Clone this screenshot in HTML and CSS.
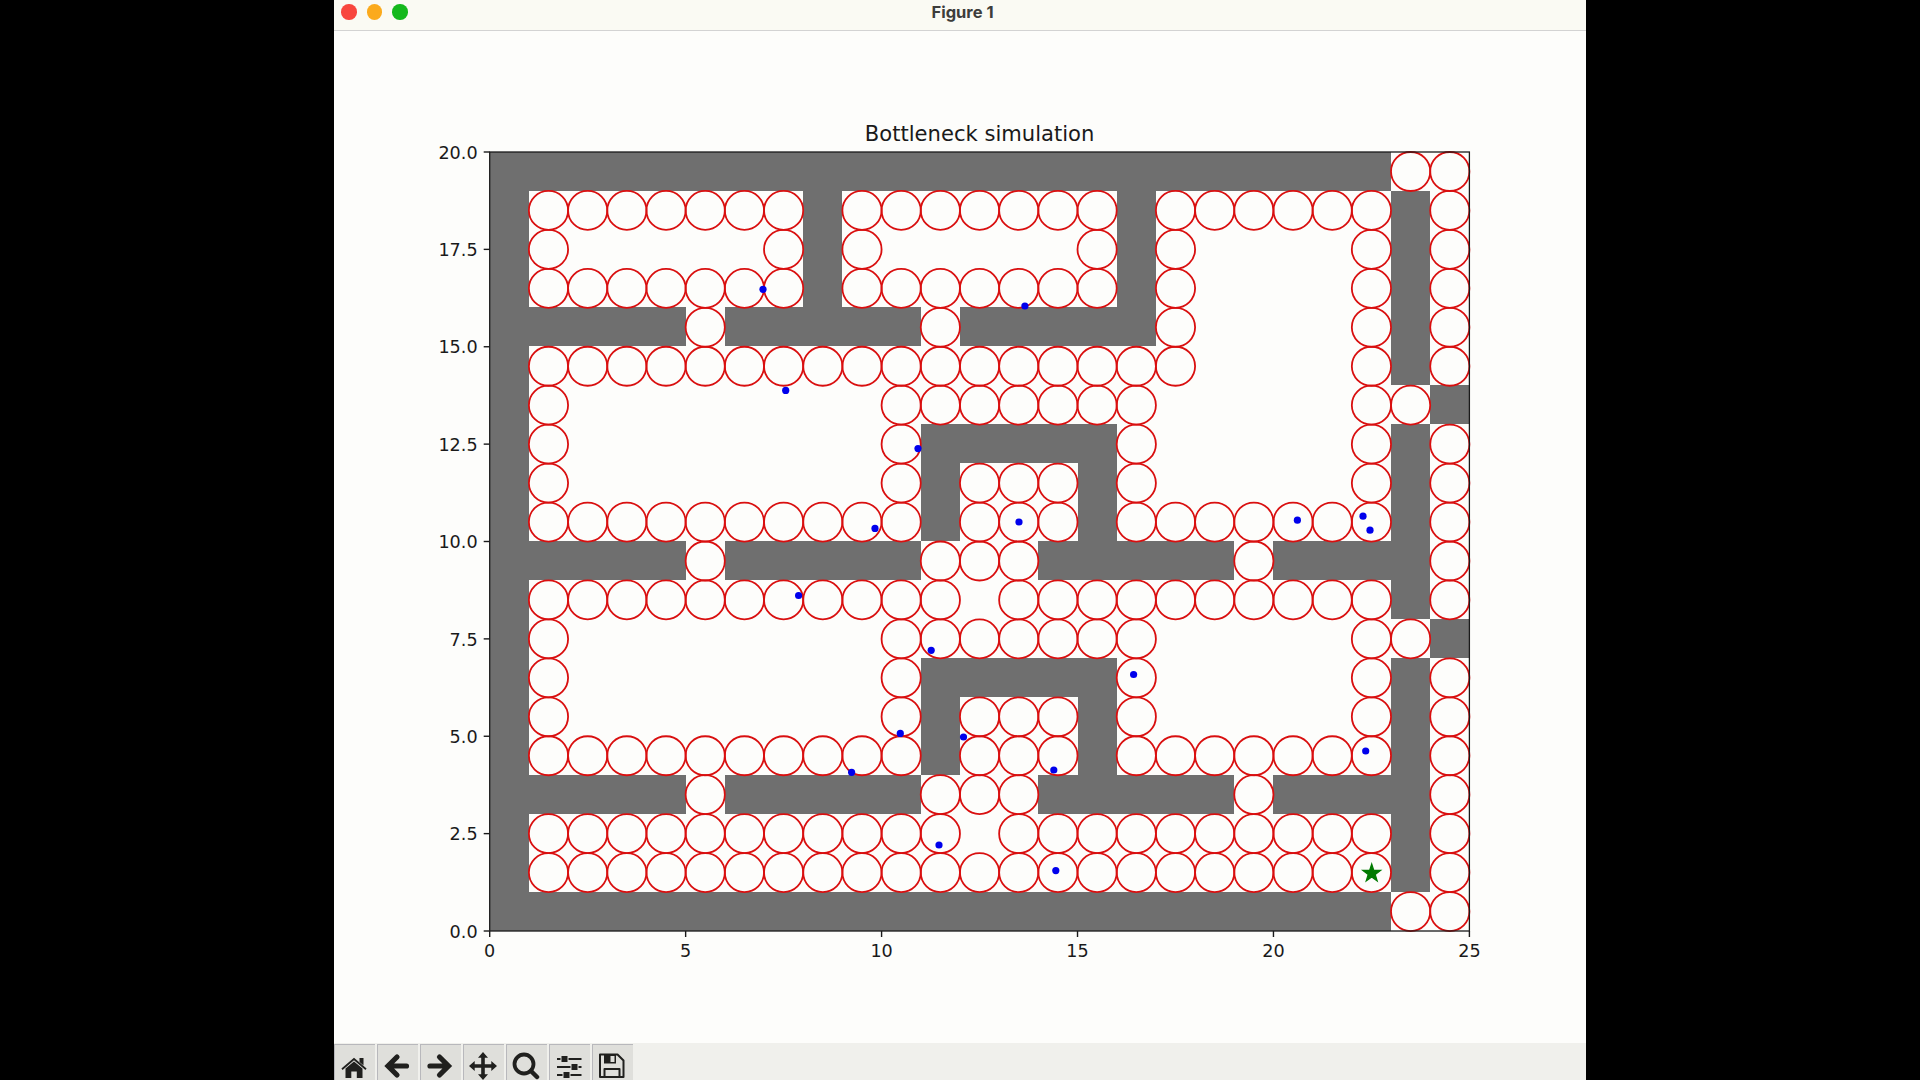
FILE: index.html
```html
<!DOCTYPE html>
<html lang="en">
<head>
<meta charset="utf-8">
<title>Figure 1</title>
<link rel="stylesheet" href="styles.css">
</head>
<body>
<main class="window">
  <header class="titlebar">
    <div class="lights"><span class="light close"></span><span class="light minimize"></span><span class="light maximize"></span></div>
    <h1 class="title">Figure 1</h1>
  </header>
  <section class="figure">
    <svg class="plot" viewBox="334 31 1252 1012" role="img" aria-label="Bottleneck simulation">
      <text class="plot-title" x="979.6" y="140.7">Bottleneck simulation</text>
      <g id="walls" class="walls"></g>
      <g id="cells" class="cells"></g>
      <g id="agents" class="agents"></g>
      <path class="goal" d="M1371.7 864l2.100 6.400h6.800l-5.400 4 2 6.500-5.500-4-5.500 4 2-6.500-5.400-4h6.800z"/>
      <g id="ticks" class="ticks"></g>
      <rect class="frame" x="489.7" y="152" width="979.7" height="779"/>
    </svg>
  </section>
  <nav class="toolbar">
    <button class="tool" aria-label="Home"><svg viewBox="0 0 28 28"><path d="M14 8.500 22.500 15.600V25h-5.700v-6.500h-5.500V25H5.500v-9.400z"/><path class="roof" d="M2 16.200 14 6 26 16.200"/><path d="M19.500 5h4v7.500L19.500 9z"/></svg></button>
    <button class="tool" aria-label="Back"><svg viewBox="0 0 28 28"><path class="arrow" d="M23.500 13H6M14 4 5 13l9 9"/></svg></button>
    <button class="tool" aria-label="Forward"><svg viewBox="0 0 28 28"><path class="arrow" d="M4 13h17.500M13.500 4l9 9-9 9"/></svg></button>
    <button class="tool" aria-label="Pan"><svg viewBox="0 0 28 28"><path d="M14-1l5 5.700h-3.200v6.500h6.500V8L28 13l-5.700 5v-3.200h-6.500v6.500H19L14 27l-5-5.700h3.200v-6.500H5.700V18L0 13l5.700-5v3.200h6.500V4.700H9z"/></svg></button>
    <button class="tool" aria-label="Zoom"><svg viewBox="0 0 28 28"><circle class="lens" cx="12" cy="11" r="9.500"/><path class="handle" d="m19 18 6 6"/></svg></button>
    <button class="tool" aria-label="Configure subplots"><svg viewBox="0 0 28 28"><path class="rail" d="M2 6h24.500M2 14h24.500M2 22h24.500"/><path class="gap" d="M5.500 6h8M15.500 14h8M7.500 22h8"/><path d="M6.500 3h6v6h-6zM16.500 11h6v6h-6zM8.500 19h6v6h-6z"/></svg></button>
    <button class="tool" aria-label="Save"><svg viewBox="0 0 28 28"><path class="disk" d="M2 1.500h17.500l6 6V24H2zM6.500 24v-8h15v8"/><path fill-rule="evenodd" d="M6 2h12v8.500H6zM12.500 3V9h4V3z"/></svg></button>
  </nav>
</main>
<script src="plot.js"></script>
</body>
</html>
```
FILE: styles.css
```css
* { box-sizing: border-box; }
body {
  margin: 0;
  height: 100vh;
  overflow: hidden;
  background: #000;
  display: flex;
  justify-content: center;
}
.window {
  width: 1252px;
  height: 1080px;
  background: #fdfdfb;
  display: grid;
  grid-template-rows: 31px 1012px 37px;
}
.titlebar {
  display: grid;
  grid-template-columns: 1fr auto 1fr;
  background: #fafaf3;
  border-bottom: 1px solid #d3d3d3;
  padding: 0 7px 6px;
  align-items: center;
}
.lights { display: flex; gap: 10px; }
.light { width: 15.500px; height: 15.500px; border-radius: 50%; }
.close { background: #f8463e; }
.minimize { background: #fbaa1c; }
.maximize { background: #14b81c; }
.title {
  margin: 0 0 0 5px;
  font: 700 16.500px/24px Inter, sans-serif;
  color: #3d3d3b;
}
.plot { display: block; width: 1252px; height: 1012px; }
.plot text {
  font-family: "DejaVu Sans", sans-serif;
  font-size: 17.600px;
  fill: #1a1a1a;
  text-anchor: middle;
}
.plot .plot-title { font-size: 21.100px; }
.plot .y-label { text-anchor: end; }
.walls { fill: #6f6f6f; shape-rendering: crispEdges; }
.cells { fill: none; stroke: #d90f0f; stroke-width: 1.800px; }
.agents { fill: #0000ec; }
.goal { fill: #007a00; stroke: #007a00; stroke-width: 1.200px; }
.ticks line { stroke: #1a1a1a; stroke-width: 1.400px; }
.frame { fill: none; stroke: #1a1a1a; stroke-width: 1.300px; }
.toolbar {
  display: flex;
  gap: 2px;
  background: #f0f0ec;
  overflow: hidden;
}
.tool {
  flex: none;
  width: 41px;
  height: 43px;
  margin-top: 1px;
  padding: 8px 6px 8px 5px;
  border: solid #b8b8bc;
  border-width: 1px 0 0 1px;
  background: #dfdfdb;
}
.tool svg { display: block; width: 28px; height: 28px; overflow: visible; fill: #20201e; }
.tool .roof { fill: none; stroke: #20201e; stroke-width: 1.800px; }
.tool .arrow { fill: none; stroke: #20201e; stroke-width: 5.200px; stroke-linecap: round; }
.tool .lens { fill: none; stroke: #20201e; stroke-width: 3.800px; }
.tool .handle { stroke: #20201e; stroke-width: 4.500px; stroke-linecap: round; }
.tool .rail { stroke: #20201e; stroke-width: 1.800px; }
.tool .gap { stroke: #dfdfdb; stroke-width: 3px; }
.tool .disk { fill: none; stroke: #20201e; stroke-width: 2px; stroke-linejoin: round; }
```
FILE: plot.js
```js
const NS = "http://www.w3.org/2000/svg";
const LEFT = 489.7, TOP = 152, CW = 39.188, CH = 38.95, BOTTOM = 931;

// One string per row, top to bottom: # wall, o waypoint circle, . open floor.
const grid = [
  "#######################oo",
  "#ooooooo#ooooooo#oooooo#o",
  "#o.....o#o.....o#o....o#o",
  "#ooooooo#ooooooo#o....o#o",
  "#####o#####o#####o....o#o",
  "#ooooooooooooooooo....o#o",
  "#o........ooooooo.....oo#",
  "#o........o#####o.....o#o",
  "#o........o#ooo#o.....o#o",
  "#oooooooooo#ooo#ooooooo#o",
  "#####o#####ooo#####o####o",
  "#ooooooooooo.oooooooooo#o",
  "#o........ooooooo.....oo#",
  "#o........o#####o.....o#o",
  "#o........o#ooo#o.....o#o",
  "#oooooooooo#ooo#ooooooo#o",
  "#####o#####ooo#####o####o",
  "#ooooooooooo.oooooooooo#o",
  "#oooooooooooooooooooooo#o",
  "#######################oo"
];

const agents = [
  [763, 289.3], [1024.9, 306], [785.7, 390.4], [918, 448.6], [875, 528.4],
  [1019, 522], [1297.4, 520.2], [1363, 516.2], [1370, 530.2], [798.6, 595.5],
  [931.2, 650.3], [1133.6, 674.5], [900.3, 733.4], [963.5, 737], [851.6, 772.3],
  [1053.8, 770], [1365.7, 751], [939, 845], [1055.8, 870.6]
];

function add(parent, tag, attrs, text) {
  const el = document.createElementNS(NS, tag);
  for (const key in attrs) el.setAttribute(key, attrs[key]);
  if (text !== undefined) el.textContent = text;
  document.getElementById(parent).appendChild(el);
}

grid.forEach((row, r) => {
  for (const run of row.matchAll(/#+/g)) {
    add("walls", "rect", {
      x: LEFT + run.index * CW, y: TOP - 0.4 + r * CH,
      width: run[0].length * CW, height: CH
    });
  }
  [...row].forEach((cell, c) => {
    if (cell === "o") {
      add("cells", "ellipse", {
        cx: LEFT + (c + 0.5) * CW, cy: TOP + (r + 0.5) * CH, rx: 19.6, ry: 19.5
      });
    }
  });
});

agents.forEach(([cx, cy]) => add("agents", "circle", { cx, cy, r: 3.6 }));

for (let v = 0; v <= 25; v += 5) {
  const x = LEFT + v * CW;
  add("ticks", "line", { x1: x, x2: x, y1: BOTTOM, y2: BOTTOM + 6 });
  add("ticks", "text", { x, y: 956.6 }, v);
}
for (let v = 0; v <= 20; v += 2.5) {
  const y = BOTTOM - v * CH;
  add("ticks", "line", { x1: LEFT - 6, x2: LEFT, y1: y, y2: y });
  add("ticks", "text", { x: 477.6, y: y + 6.7, class: "y-label" }, v.toFixed(1));
}
```
